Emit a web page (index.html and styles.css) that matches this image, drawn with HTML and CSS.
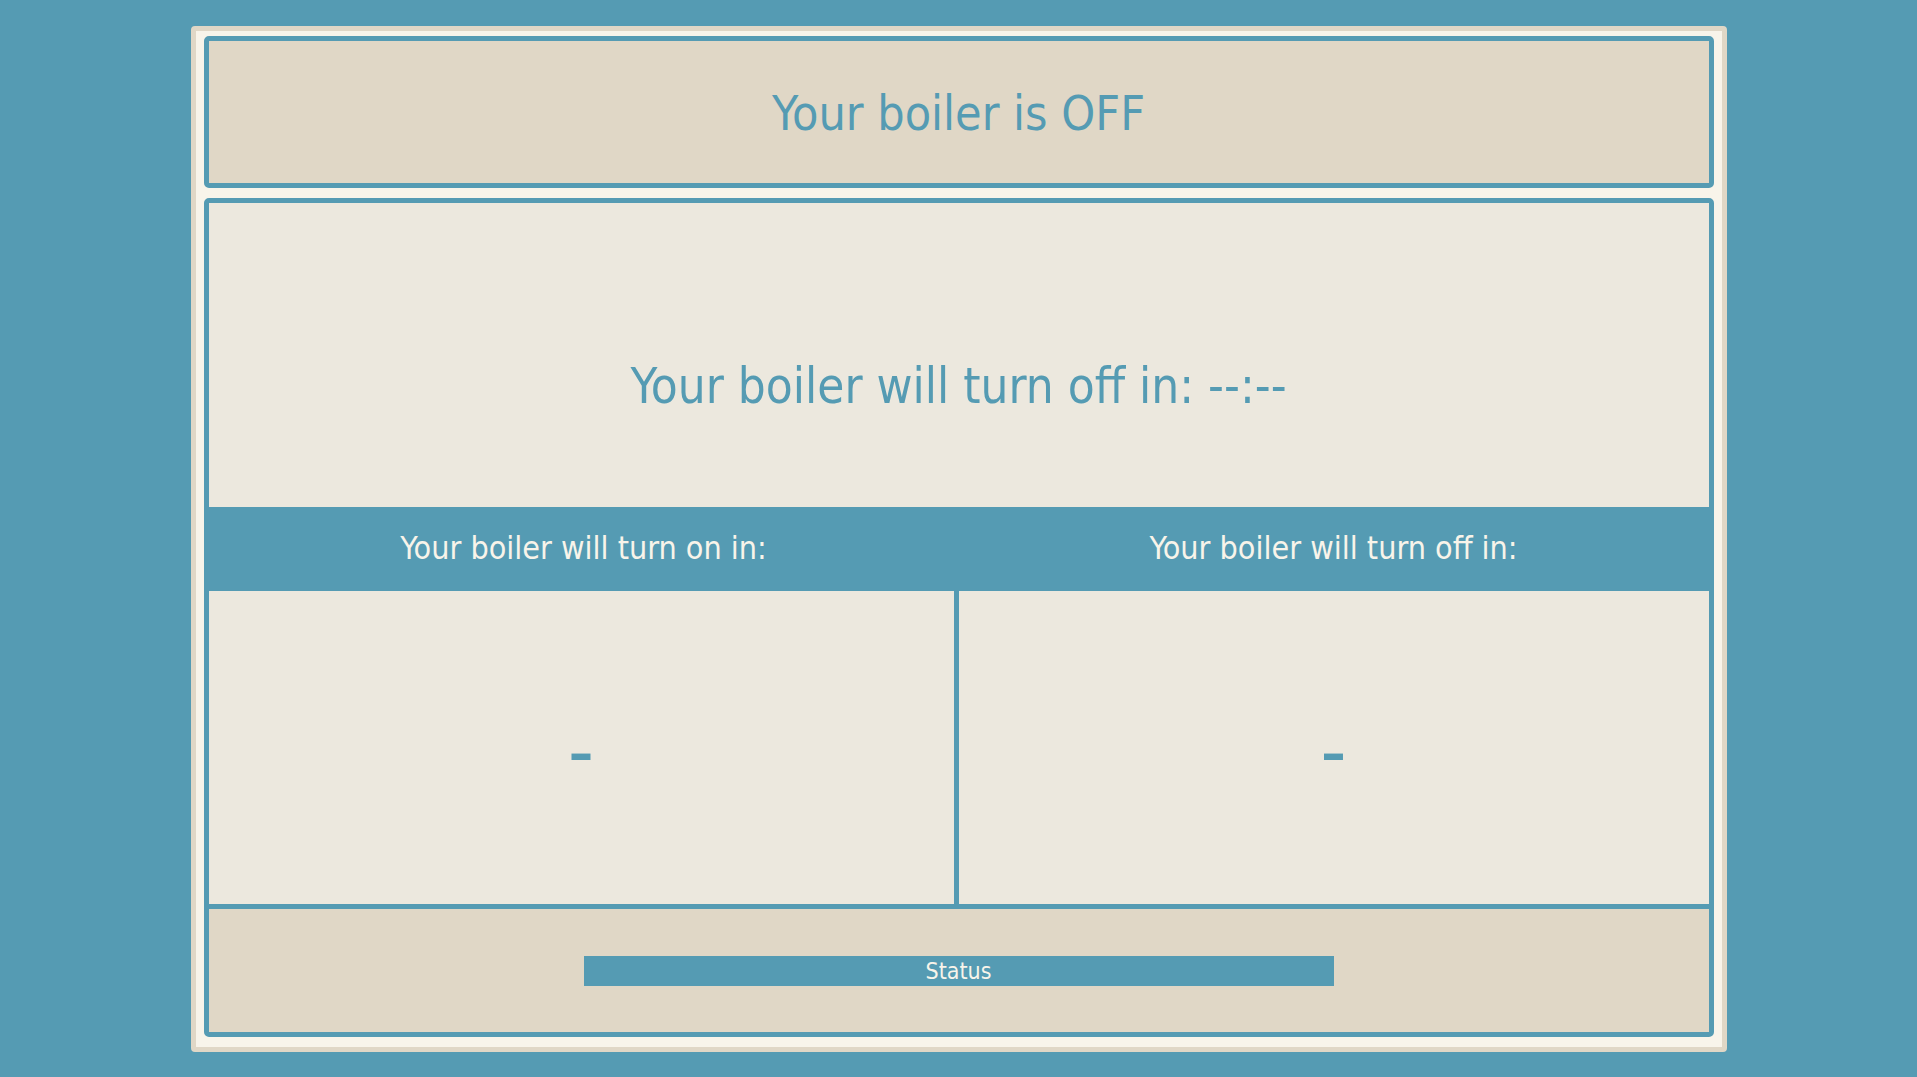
FILE: index.html
```html
<!DOCTYPE html>
<html lang="en">
<head>
<meta charset="utf-8">
<title>Boiler</title>
<link rel="stylesheet" href="styles.css">
</head>
<body>
<div class="frame">
  <header class="state-box">
    <h1 class="state-text">Your boiler is OFF</h1>
  </header>
  <main class="main-box">
    <section class="countdown">
      <p class="countdown-text">Your boiler will turn off in: --:--</p>
    </section>
    <div class="band">
      <div class="band-label">Your boiler will turn on in:</div>
      <div class="band-label">Your boiler will turn off in:</div>
    </div>
    <div class="columns">
      <div class="col col-left"><span class="dash">-</span></div>
      <div class="col"><span class="dash">-</span></div>
    </div>
    <footer class="footer">
      <div class="status">Status</div>
    </footer>
  </main>
</div>
</body>
</html>
```
FILE: styles.css
```css
* { box-sizing: border-box; }

html, body {
  margin: 0;
  padding: 0;
  background: #559bb3;
  font-family: "DejaVu Sans Condensed", "DejaVu Sans", sans-serif;
  font-stretch: condensed;
}

.frame {
  width: 1536px;
  margin: 26px auto 0;
  border: 5px solid #e0d7c6;
  border-radius: 4px;
  background: #f8f4ea;
  padding: 5px 8px 10px 8px;
  display: flex;
  flex-direction: column;
  gap: 10px;
}

.state-box {
  height: 152px;
  border: 5px solid #559bb3;
  border-radius: 5px;
  background: #e0d7c6;
  display: flex;
  align-items: center;
  justify-content: center;
}

.state-text {
  margin: 0;
  font-weight: normal;
  font-size: 48px;
  color: #559bb3;
  line-height: 1;
  padding-top: 2px;
}

.main-box {
  height: 839px;
  border: 5px solid #559bb3;
  border-radius: 5px;
  background: #ece8de;
  display: flex;
  flex-direction: column;
  overflow: hidden;
}

.countdown {
  height: 304px;
  display: flex;
  align-items: center;
  justify-content: center;
  padding-top: 62px;
}

.countdown-text {
  margin: 0;
  font-size: 49px;
  color: #559bb3;
  line-height: 1;
}

.band {
  height: 84px;
  background: #559bb3;
  display: grid;
  grid-template-columns: 1fr 1fr;
  align-items: center;
}

.band-label {
  text-align: center;
  font-size: 32px;
  color: #f8f4ea;
  line-height: 1;
  padding-bottom: 3px;
}

.columns {
  height: 318px;
  display: grid;
  grid-template-columns: 1fr 1fr;
  border-bottom: 5px solid #559bb3;
}

.col {
  display: flex;
  align-items: center;
  justify-content: center;
  padding-top: 8px;
}

.col-left {
  border-right: 5px solid #559bb3;
}

.dash {
  font-size: 80px;
  color: #559bb3;
  line-height: 1;
}

.footer {
  flex: 1;
  background: #e0d7c6;
  display: flex;
  align-items: center;
  justify-content: center;
}

.status {
  width: 50%;
  height: 30px;
  background: #559bb3;
  color: #f8f4ea;
  font-size: 23px;
  line-height: 30px;
  text-align: center;
}
```
